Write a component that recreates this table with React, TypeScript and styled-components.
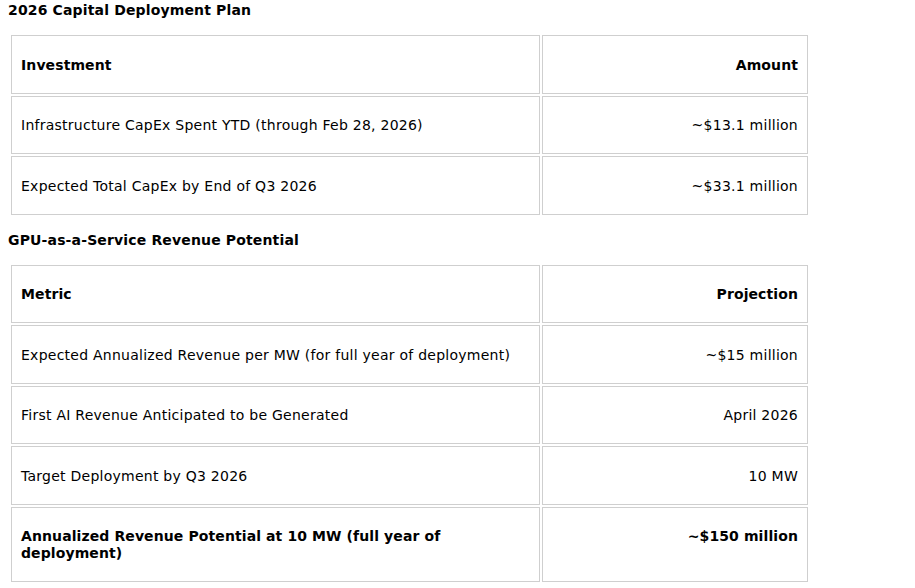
import React from 'react';
import styled, {createGlobalStyle} from "styled-components";

const GlobalStyle = createGlobalStyle`
    body {
        margin: 0;
        background: #fff;
        font-family: "DejaVu Sans", Verdana, sans-serif;
        color: #000;
    }
`

type Row = { label: string, value: string, strong?: boolean }

const sections: { title: string, head: [string, string], rows: Row[] }[] = [
    {
        title: "2026 Capital Deployment Plan",
        head: ["Investment", "Amount"],
        rows: [
            {label: "Infrastructure CapEx Spent YTD (through Feb 28, 2026)", value: "~$13.1 million"},
            {label: "Expected Total CapEx by End of Q3 2026", value: "~$33.1 million"},
        ],
    },
    {
        title: "GPU-as-a-Service Revenue Potential",
        head: ["Metric", "Projection"],
        rows: [
            {label: "Expected Annualized Revenue per MW (for full year of deployment)", value: "~$15 million"},
            {label: "First AI Revenue Anticipated to be Generated", value: "April 2026"},
            {label: "Target Deployment by Q3 2026", value: "10 MW"},
            {label: "Annualized Revenue Potential at 10 MW (full year of deployment)", value: "~$150 million", strong: true},
        ],
    },
]

export default function App() {
    return (
        <Page>
            <GlobalStyle/>
            {sections.map(section => (
                <Section key={section.title}>
                    <Title>{section.title}</Title>
                    <Table>
                        <tbody>
                        <tr>
                            <LabelCell as="th" $strong>{section.head[0]}</LabelCell>
                            <ValueCell as="th" $strong>{section.head[1]}</ValueCell>
                        </tr>
                        {section.rows.map(row => (
                            <tr key={row.label}>
                                <LabelCell $strong={row.strong}>{row.label}</LabelCell>
                                <ValueCell $strong={row.strong}>{row.value}</ValueCell>
                            </tr>
                        ))}
                        </tbody>
                    </Table>
                </Section>
            ))}
        </Page>
    );
}

const Page = styled.div`
    padding: 0 8px;
    width: 915px;
    box-sizing: border-box;
`

const Section = styled.section`
    display: flex;
    flex-direction: column;
    margin-bottom: 13px;
`

const Title = styled.h3`
    margin: 2px 0 16px;
    font-size: 14px;
    font-weight: 700;
    line-height: 17px;
    letter-spacing: 0.15px;
`

const Table = styled.table`
    width: 801px;
    margin-left: 1px;
    border-collapse: separate;
    border-spacing: 2px;
    margin-top: -2px;
`

const Cell = styled.td<{ $strong?: boolean }>`
    border: 1px solid #cfcfcf;
    padding: 20.5px 9px 19.5px;
    font-size: 14px;
    line-height: 16.5px;
    font-weight: ${props => props.$strong ? 700 : 400};
    letter-spacing: ${props => props.$strong ? "0.1px" : "0.25px"};
    vertical-align: top;
`

const LabelCell = styled(Cell)`
    width: 66.5%;
    text-align: left;
`

const ValueCell = styled(Cell)`
    text-align: right;
`
